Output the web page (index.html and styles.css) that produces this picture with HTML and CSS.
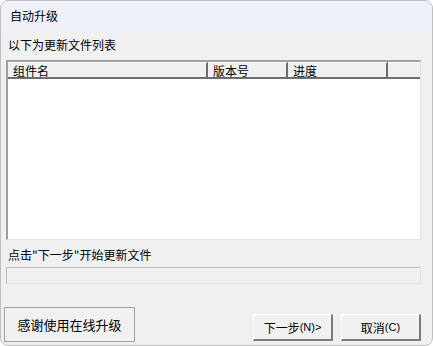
FILE: index.html
```html
<!DOCTYPE html>
<html>
<head>
<meta charset="utf-8">
<link rel="stylesheet" href="styles.css">
</head>
<body>
<div class="window">
  <div class="titlebar">自动升级</div>
  <div class="content">
    <div class="label top-label">以下为更新文件列表</div>
    <div class="listview">
      <div class="header">
        <div class="col c1">组件名</div>
        <div class="col c2">版本号</div>
        <div class="col c3">进度</div>
        <div class="col c4"></div>
      </div>
      <div class="list-body"></div>
    </div>
    <div class="label hint">点击"下一步"开始更新文件</div>
    <div class="progress"></div>
    <div class="footer">
      <div class="btn thanks">感谢使用在线升级</div>
      <div class="btn next">下一步<span class="latin">(N)&gt;</span></div>
      <div class="btn cancel">取消<span class="latin">(C)</span></div>
    </div>
  </div>
</div>
</body>
</html>
```
FILE: styles.css
```css
* { box-sizing: border-box; }
html, body {
  margin: 0;
  padding: 0;
  background: #ffffff;
  width: 433px;
  height: 346px;
  overflow: hidden;
}
body {
  font-family: "Noto Sans CJK SC", "Liberation Sans", sans-serif;
  font-size: 12px;
  color: #000;
}
.window {
  width: 433px;
  height: 346px;
  border: 1px solid #bfbfbf;
  border-radius: 8px;
  overflow: hidden;
  background: #f0f0f0;
  display: flex;
  flex-direction: column;
}
.titlebar {
  height: 30px;
  background: #eef2f8;
  padding: 0 0 0 9px;
  line-height: 30px;
  font-size: 12px;
}
.content {
  flex: 1;
  display: flex;
  flex-direction: column;
  padding: 0 11px 0 5px;
}
.label {
  height: 18px;
  line-height: 18px;
  padding-left: 2px;
}
.top-label { margin-top: 5px; margin-bottom: 6px; }
.listview {
  height: 180px;
  border-top: 2px solid #a0a0a0;
  border-left: 2px solid #a0a0a0;
  border-right: 1px solid #e3e3e3;
  border-bottom: 1px solid #e3e3e3;
  background: #fff;
  display: flex;
  flex-direction: column;
}
.header {
  display: flex;
  height: 17px;
  background: #f0f0f0;
  border-bottom: 2px solid #6d6d6d;
}
.col {
  line-height: 15px;
  padding-left: 5px;
  border-right: 2px solid #6d6d6d;
  border-top: 1px solid #fff;
}
.c1 { width: 200px; }
.c2 { width: 80px; }
.c3 { width: 100px; }
.c4 { flex: 1; border-right: none; }
.list-body { flex: 1; }
.hint { margin-top: 6px; }
.progress {
  margin-top: 3px;
  height: 17px;
  border: 1px solid #bcbcbc;
  border-right-color: #e3e3e3;
  border-bottom-color: #e3e3e3;
  background: #f0f0f0;
}
.footer {
  margin-top: 23px;
  display: flex;
  align-items: flex-end;
}
.btn {
  background: #f1f1f1;
  border: 1px solid #adadad;
  border-right: 2px solid #7a7a7a;
  border-bottom: 2px solid #7a7a7a;
  border-top-color: #fff;
  border-left-color: #fff;
  display: flex;
  align-items: center;
  justify-content: center;
  font-size: 12px;
}
.thanks {
  width: 131px;
  height: 35px;
  margin-left: -2px;
  border: 1px solid #a0a0a0;
  font-size: 13px;
}
.next {
  width: 80px;
  height: 27px;
  margin-left: auto;
  margin-bottom: 1px;
}
.cancel {
  width: 80px;
  height: 27px;
  margin-left: 8px;
  margin-bottom: 1px;
}
.latin { font-family: "Liberation Sans", sans-serif; font-size: 11px; }
```
